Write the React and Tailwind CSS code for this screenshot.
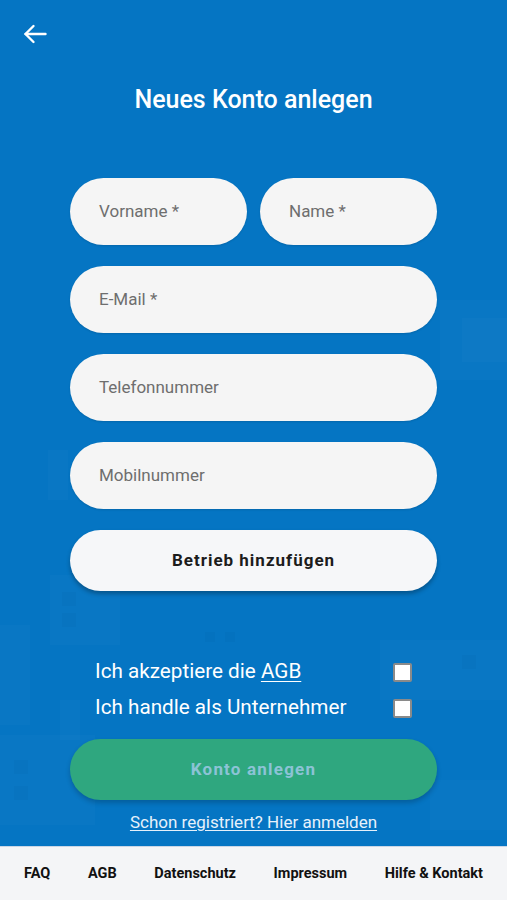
import React from "react";

function Field({ label, className = "" }) {
  return (
    <div
      className={`h-[67px] rounded-full bg-[#f5f5f5] flex items-center pl-[29px] text-[17px] text-[#6e6e6e] shadow-[0_1px_2px_rgba(0,0,0,0.12)] ${className}`}
    >
      {label}
    </div>
  );
}

function Checkbox() {
  return <div className="w-[19px] h-[19px] bg-white border-2 border-[#8a8a8a] rounded-[2px]" />;
}

export default function App() {
  return (
    <div className="min-h-[900px] flex flex-col" style={{ fontFamily: "Roboto, 'Noto Sans', sans-serif" }}>
      <main className="relative flex-1 bg-[#0575c3] overflow-hidden">
        <svg className="absolute inset-0 w-full h-full" viewBox="0 0 507 846" preserveAspectRatio="none">
          <g fill="#ffffff" fillOpacity="0.018">
            <rect x="440" y="300" width="67" height="80" />
            <rect x="462" y="318" width="45" height="44" />
            <rect x="48" y="450" width="20" height="50" />
            <rect x="50" y="575" width="70" height="70" />
            <rect x="0" y="625" width="30" height="100" />
            <rect x="60" y="700" width="20" height="40" />
            <rect x="0" y="735" width="95" height="90" />
            <rect x="380" y="640" width="127" height="60" />
            <rect x="430" y="780" width="77" height="50" />
          </g>
          <g fill="#000000" fillOpacity="0.02">
            <rect x="62" y="592" width="14" height="14" />
            <rect x="62" y="613" width="14" height="14" />
            <rect x="14" y="760" width="14" height="14" />
            <rect x="14" y="786" width="14" height="14" />
            <rect x="205" y="632" width="10" height="10" />
            <rect x="225" y="632" width="10" height="10" />
            <rect x="462" y="655" width="14" height="14" />
          </g>
        </svg>

        <div className="relative flex flex-col">
          <div className="pt-[24px] pl-[23px] h-[46px]">
            <svg width="24" height="20" viewBox="0 0 24 20" fill="none" stroke="white" strokeWidth="2.4" strokeLinecap="round" strokeLinejoin="round">
              <path d="M22.5 10H2.5" />
              <path d="M10.5 2L2.5 10L10.5 18" />
            </svg>
          </div>

          <h1 className="mt-[39px] text-center text-white text-[25px] leading-[30px] font-medium">
            Neues Konto anlegen
          </h1>

          <div className="mt-[63px] w-[367px] mx-auto flex flex-col gap-[21px]">
            <div className="flex gap-[13px]">
              <Field label="Vorname *" className="flex-1" />
              <Field label="Name *" className="flex-1" />
            </div>
            <Field label="E-Mail *" />
            <Field label="Telefonnummer" />
            <Field label="Mobilnummer" />
            <button className="h-[61px] rounded-full bg-[#f6f7f9] text-[#1c1c1c] text-[17px] font-bold tracking-[1px] shadow-[0_3px_4px_rgba(0,0,0,0.28)]">
              Betrieb hinzufügen
            </button>
          </div>

          <div className="mt-[63px] w-[367px] mx-auto pl-[25px] pr-[25px] flex flex-col">
            <div className="h-[36px] flex items-center justify-between text-white text-[20.7px]">
              <span>
                Ich akzeptiere die <span className="underline underline-offset-[3px] decoration-1">AGB</span>
              </span>
              <Checkbox />
            </div>
            <div className="h-[36px] flex items-center justify-between text-white text-[20.7px]">
              <span>Ich handle als Unternehmer</span>
              <Checkbox />
            </div>
          </div>

          <button className="mt-[13px] w-[367px] mx-auto h-[61px] rounded-full bg-[#2fa77f] text-[#8cc3d6] text-[17px] font-bold tracking-[1.2px] shadow-[0_3px_5px_rgba(0,0,0,0.2)]">
            Konto anlegen
          </button>

          <div className="mt-[10px] text-center">
            <span className="text-[#e6f1fb] text-[17px] leading-[24px] underline underline-offset-[2px] decoration-1">
              Schon registriert? Hier anmelden
            </span>
          </div>
        </div>
      </main>

      <footer className="h-[54px] bg-[#f4f5f7] border-t border-[#c9d6e6] flex items-center justify-between px-[24px] text-[14.5px] font-bold text-[#111]">
        <span>FAQ</span>
        <span>AGB</span>
        <span>Datenschutz</span>
        <span>Impressum</span>
        <span>Hilfe &amp; Kontakt</span>
      </footer>
    </div>
  );
}
